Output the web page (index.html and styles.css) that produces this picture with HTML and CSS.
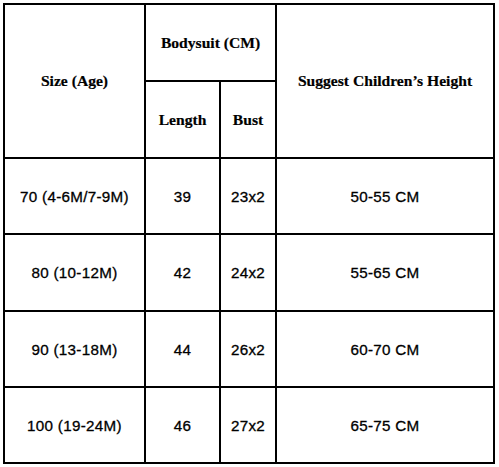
FILE: index.html
```html
<!DOCTYPE html>
<html>
<head>
<meta charset="utf-8">
<link rel="stylesheet" href="styles.css">
</head>
<body>
<div class="chart">
  <div class="cell head size">Size (Age)</div>
  <div class="cell head body">Bodysuit (CM)</div>
  <div class="cell head height">Suggest Children’s Height</div>
  <div class="cell head">Length</div>
  <div class="cell head">Bust</div>

  <div class="cell">70 (4-6M/7-9M)</div>
  <div class="cell">39</div>
  <div class="cell">23x2</div>
  <div class="cell">50-55 CM</div>

  <div class="cell">80 (10-12M)</div>
  <div class="cell">42</div>
  <div class="cell">24x2</div>
  <div class="cell">55-65 CM</div>

  <div class="cell">90 (13-18M)</div>
  <div class="cell">44</div>
  <div class="cell">26x2</div>
  <div class="cell">60-70 CM</div>

  <div class="cell">100 (19-24M)</div>
  <div class="cell">46</div>
  <div class="cell">27x2</div>
  <div class="cell">65-75 CM</div>
</div>
</body>
</html>
```

FILE: styles.css
```css
html, body {
  margin: 0;
  padding: 0;
  background: #fff;
}
body {
  padding: 3px;
}
.chart {
  display: grid;
  grid-template-columns: 139px 73px 54px 216px;
  grid-template-rows: 75px 75px 74px 75px 74px 74px;
  gap: 2px;
  padding: 2px;
  background: #000;
  width: max-content;
}
.cell {
  background: #fff;
  display: flex;
  align-items: center;
  justify-content: center;
  text-align: center;
  font-family: "Liberation Sans", Arial, sans-serif;
  font-size: 15.2px;
  letter-spacing: 0.3px;
  color: #000;
  -webkit-text-stroke: 0.3px #000;
}
.head {
  font-family: "Liberation Serif", "Times New Roman", serif;
  font-weight: bold;
  font-size: 15.6px;
  letter-spacing: 0;
  color: #000;
  -webkit-text-stroke: 0.2px #000;
}
.size {
  grid-column: 1;
  grid-row: 1 / span 2;
}
.body {
  grid-column: 2 / span 2;
  grid-row: 1;
}
.height {
  grid-column: 4;
  grid-row: 1 / span 2;
}
```
